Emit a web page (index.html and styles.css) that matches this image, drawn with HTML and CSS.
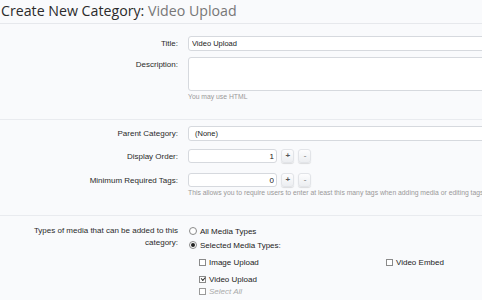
FILE: index.html
```html
<!DOCTYPE html>
<html>
<head>
  <title>Create New Category</title>
  <link rel="stylesheet" href="styles.css">
</head>
<body>
  <div class="titleBar">
    <h1>Create New Category: <em>Video Upload</em></h1>
  </div>
  <form class="xenForm">
    <fieldset>
      <div class="ctrlUnit">
        <label for="title">Title:</label>
        <div class="ctrl">
          <input id="title" class="textCtrl" type="text" value="Video Upload">
        </div>
      </div>
      <div class="ctrlUnit">
        <label for="description">Description:</label>
        <div class="ctrl">
          <textarea id="description" class="textCtrl"></textarea>
          <p class="explain">You may use HTML</p>
        </div>
      </div>
    </fieldset>
    <fieldset>
      <div class="ctrlUnit">
        <label for="parent">Parent Category:</label>
        <div class="ctrl">
          <div id="parent" class="textCtrl select">(None)</div>
        </div>
      </div>
      <div class="ctrlUnit spin">
        <label for="order">Display Order:</label>
        <div class="ctrl">
          <input id="order" class="textCtrl number" type="text" value="1">
          <button type="button" class="spinBtn">+</button>
          <button type="button" class="spinBtn">-</button>
        </div>
      </div>
      <div class="ctrlUnit spin">
        <label for="tags">Minimum Required Tags:</label>
        <div class="ctrl">
          <input id="tags" class="textCtrl number" type="text" value="0">
          <button type="button" class="spinBtn">+</button>
          <button type="button" class="spinBtn">-</button>
          <p class="explain">This allows you to require users to enter at least this many tags when adding media or editing tags.</p>
        </div>
      </div>
    </fieldset>
    <fieldset class="last">
      <div class="ctrlUnit media">
        <label>Types of media that can be added to this category:</label>
        <div class="ctrl">
          <label class="option"><input type="radio" name="media"> All Media Types</label>
          <label class="option"><input type="radio" name="media" checked> Selected Media Types:</label>
          <ul class="checkList">
            <li><label class="option"><input type="checkbox"> Image Upload</label></li>
            <li><label class="option"><input type="checkbox"> Video Embed</label></li>
            <li><label class="option"><input type="checkbox" checked> Video Upload</label></li>
          </ul>
          <label class="option selectAll"><input type="checkbox"> Select All</label>
        </div>
      </div>
    </fieldset>
  </form>
</body>
</html>
```

FILE: styles.css
```css
html, body {
  margin: 0;
  padding: 0;
  overflow: hidden;
  background: #f9fafc;
  }
body {
  width: 620px;
  font-family: "Liberation Sans", Arial, sans-serif;
  font-size: 8px;
  color: #333;
  }
.titleBar {
  height: 23px;
  border-bottom: 1px solid #e6e8ec;
  }
.titleBar h1 {
  margin: 0;
  padding: 1px 0 0 1px;
  font-family: "Open Sans", sans-serif;
  font-weight: normal;
  font-size: 14.2px;
  line-height: 20px;
  color: #2b2b2b;
  }
.titleBar h1 em {
  font-style: normal;
  color: #777;
  }
.xenForm fieldset {
  margin: 0;
  border: none;
  border-bottom: 1px solid #e9ebef;
  padding: 12px 0 17px;
  }
.xenForm fieldset + fieldset {
  padding-top: 6px;
  }
.xenForm fieldset.last {
  border-bottom: none;
  padding-top: 8px;
  }
.ctrlUnit {
  display: grid;
  grid-template-columns: 178px 1fr;
  column-gap: 10px;
  margin-bottom: 6px;
  }
.ctrlUnit:last-child {
  margin-bottom: 0;
  }
.ctrlUnit > label {
  text-align: right;
  line-height: 15px;
  color: #2a2a2a;
  }
.ctrlUnit.spin {
  margin-top: 8px;
  }
.ctrlUnit.spin + .ctrlUnit.spin {
  margin-top: 9px;
  }
.textCtrl {
  display: block;
  box-sizing: border-box;
  width: 380px;
  height: 15px;
  margin: 0;
  padding: 0 3px;
  border: 1px solid #d6d9de;
  border-radius: 3px;
  background: #fff;
  font-family: "Liberation Sans", Arial, sans-serif;
  font-size: 7.5px;
  line-height: 13px;
  color: #222;
  }
textarea.textCtrl {
  height: 34px;
  resize: none;
  }
.select {
  padding-left: 6px;
  }
.textCtrl.number {
  display: inline-block;
  vertical-align: top;
  width: 89px;
  height: 14px;
  line-height: 12px;
  text-align: right;
  padding-right: 2px;
  font-size: 8px;
  }
.spinBtn {
  vertical-align: top;
  box-sizing: border-box;
  width: 13px;
  height: 14px;
  margin: 0 0 0 2px;
  padding: 0;
  border: 1px solid #e2e4e8;
  border-radius: 3px;
  background: linear-gradient(#fdfdfe, #eceef1);
  box-shadow: 0 1px 1px rgba(0, 0, 0, 0.12);
  font-family: "Liberation Sans", Arial, sans-serif;
  font-size: 8px;
  font-weight: bold;
  line-height: 12px;
  color: #555;
  }
.spinBtn + .spinBtn {
  color: #999;
  }
.explain {
  margin: 1px 0 0;
  font-size: 6.8px;
  line-height: 10px;
  color: #999;
  white-space: nowrap;
  }
.media > label {
  line-height: 12px;
  padding-top: 1px;
  }
.option {
  display: flex;
  align-items: center;
  height: 14px;
  font-size: 8px;
  color: #222;
  white-space: nowrap;
  }
.option input {
  -webkit-appearance: none;
  appearance: none;
  box-sizing: border-box;
  width: 8px;
  height: 8px;
  margin: 0 3px 0 1px;
  border: 1px solid #8a8a8a;
  background: #fff;
  display: grid;
  place-content: center;
  }
.option input[type=radio] {
  border-radius: 50%;
  }
.option input[type=radio]:checked::before {
  content: "";
  width: 4px;
  height: 4px;
  border-radius: 50%;
  background: #222;
  }
.option input[type=checkbox] {
  width: 7px;
  height: 7px;
  margin-right: 3px;
  }
.option input[type=checkbox]:checked::before {
  content: "";
  width: 3px;
  height: 1.5px;
  margin-top: -1px;
  border-left: 1px solid #333;
  border-bottom: 1px solid #333;
  transform: rotate(-45deg);
  }
.checkList {
  list-style: none;
  margin: 3px 0 0 10px;
  padding: 0;
  display: grid;
  grid-template-columns: 187px 187px;
  row-gap: 3px;
  }
.selectAll {
  margin-left: 10px;
  height: 10px;
  font-style: italic;
  color: #aaa;
  }
.selectAll input {
  border-color: #999;
  }
```
